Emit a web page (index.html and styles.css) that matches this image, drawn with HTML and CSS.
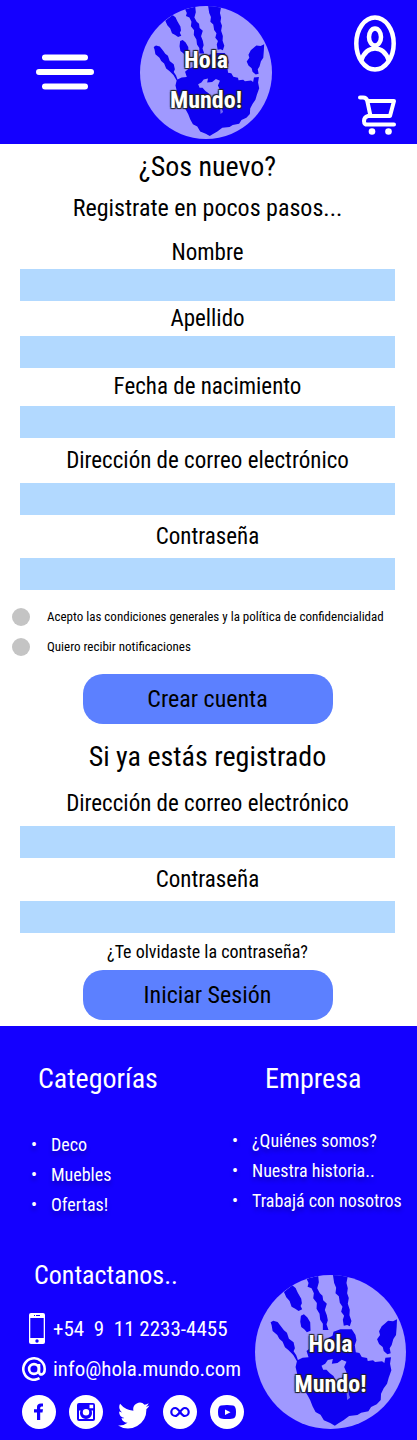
FILE: index.html
```html
<!DOCTYPE html>
<html lang="es">
<head>
<meta charset="utf-8">
<meta name="viewport" content="width=device-width, initial-scale=1">
<title>Hola Mundo!</title>
<link rel="stylesheet" href="styles.css">
</head>
<body>
<svg class="sprite" aria-hidden="true">
  <symbol id="hand" viewBox="29 44 454 462" preserveAspectRatio="none">
    <clipPath id="disc"><ellipse cx="256" cy="275" rx="227" ry="231"/></clipPath>
    <ellipse cx="256" cy="275" rx="227" ry="231" fill="#a099ff"/>
    <g clip-path="url(#disc)" fill="#0e00f2">
      <path d="M76 186 84 181 97 185 108 199 116 210 125 217 131 235 145 246 149 264 145 273 153 285 158 299 172 292 190 291 184 272 196 262 240 245 250 232 262 226 265 214 286 207 320 207 331 224 334 240 329 255 332 276 343 278 350 290 366 293 368 302 384 300 390 305 411 303 418 308 421 292 438 291 435 310 439 330 431 352 426 370 416 384 408 400 407 419 395 432 378 440 370 453 348 457 337 464 312 467 295 480 280 489 269 496 255 488 236 480 226 463 211 455 202 438 195 420 187 405 170 378 158 350 151 320 155 303 144 284 130 270 119 261 112 244 102 235 96 224 82 212 79 195Z"/>
      <path d="M116 95 141 75 151 83 158 98 168 115 170 129 166 137 171 147 160 152 150 145 139 139 133 122 123 111Z"/>
      <path d="M167 166 176 162 186 171 195 186 196 211 185 216 177 207 168 200 165 184Z"/>
      <path d="M184 55 219 46 221 66 216 84 224 99 232 106 234 120 245 130 239 149 245 165 248 180 244 192 250 209 233 209 233 190 225 178 223 160 214 145 215 128 204 114 206 99 199 84 187 79 190 68Z"/>
      <path d="M263 42 309 42 304 68 308 84 306 99 311 113 308 130 314 148 313 165 319 182 314 198 306 194 296 196 293 178 297 166 288 154 292 139 284 127 281 108 271 99 273 82 267 68Z"/>
      <path d="M456 177 444 183 429 181 419 190 410 198 402 213 405 224 396 237 402 251 413 260 416 272 427 282 437 279 434 264 440 254 445 236 453 224 455 199Z"/>
      <path fill="#a099ff" d="M229 316 240 310 248 299 263 296 260 310 277 308 290 298 304 304 297 320 304 336 302 352 291 349 287 360 272 361 265 347 254 339 244 328 234 328Z"/>
      <path fill="#6f67f4" d="M304 389 312 381 311 402 315 412 306 419Z"/>
    </g>
  </symbol>
</svg>

<header class="top">
  <button class="menu" type="button" aria-label="Menú">
    <svg width="58" height="36" viewBox="0 0 58 36" stroke="#fff" stroke-width="6" stroke-linecap="round"><path d="M9 3.500H49M3 18H55M9 32.500H49"/></svg>
  </button>
  <a class="logo" href="#">
    <svg class="logo-art" aria-hidden="true"><use href="#hand"/></svg>
    <span class="logo-text">Hola<br>Mundo!</span>
  </a>
  <nav class="tools">
    <a href="#" aria-label="Mi cuenta">
      <svg width="42" height="57" viewBox="0 0 42 57" fill="none" stroke="#fff" stroke-width="4.500"><ellipse cx="21" cy="28.500" rx="18.700" ry="26"/><ellipse cx="21" cy="22" rx="6" ry="8.500"/><path d="M7 46C10 37 15 33.500 21 33.500S32 37 35 46"/></svg>
    </a>
    <a href="#" aria-label="Carrito">
      <svg width="38" height="40" viewBox="0 0 38 40" fill="none" stroke="#fff" stroke-width="4" stroke-linecap="round" stroke-linejoin="round"><path d="M2 2.500H5Q8.500 2.500 9.300 6L12.500 21M9.500 6H36L32 21H10Q6 22 6 26T10 29.500H36"/><g fill="#fff" stroke="none"><circle cx="14" cy="36.500" r="3.300"/><circle cx="30.500" cy="36.500" r="3.300"/></g></svg>
    </a>
  </nav>
</header>

<main>
  <form class="form">
    <h1 class="title">¿Sos nuevo?</h1>
    <p class="lead">Registrate en pocos pasos...</p>
    <label class="label label-short" for="name">Nombre</label>
    <input class="box" id="name" type="text">
    <label class="label" for="surname">Apellido</label>
    <input class="box" id="surname" type="text">
    <label class="label label-mid" for="birth">Fecha de nacimiento</label>
    <input class="box" id="birth" type="text">
    <label class="label label-tall" for="mail">Dirección de correo electrónico</label>
    <input class="box" id="mail" type="email">
    <label class="label label-pass" for="pass">Contraseña</label>
    <input class="box" id="pass" type="password">
    <div class="checks">
      <label class="check"><input type="checkbox"><span>Acepto las condiciones generales y la política de confidencialidad</span></label>
      <label class="check"><input type="checkbox"><span>Quiero recibir notificaciones</span></label>
    </div>
    <button class="action" type="submit">Crear cuenta</button>
  </form>
  <form class="form login">
    <h2 class="title">Si ya estás registrado</h2>
    <label class="label label-tall" for="login-mail">Dirección de correo electrónico</label>
    <input class="box" id="login-mail" type="email">
    <label class="label label-pass" for="login-pass">Contraseña</label>
    <input class="box" id="login-pass" type="password">
    <a class="forgot" href="#">¿Te olvidaste la contraseña?</a>
    <button class="action" type="submit">Iniciar Sesión</button>
  </form>
</main>

<footer class="foot">
  <div class="links">
    <section>
      <h2 class="foot-title">Categorías</h2>
      <ul class="list">
        <li><a href="#">Deco</a></li>
        <li><a href="#">Muebles</a></li>
        <li><a href="#">Ofertas!</a></li>
      </ul>
    </section>
    <section class="company">
      <h2 class="foot-title">Empresa</h2>
      <ul class="list">
        <li><a href="#">¿Quiénes somos?</a></li>
        <li><a href="#">Nuestra historia..</a></li>
        <li><a href="#">Trabajá con nosotros</a></li>
      </ul>
    </section>
  </div>
  <div class="contact">
    <section>
      <h2 class="foot-title contact-title">Contactanos..</h2>
      <a class="line" href="tel:+5491122334455">
        <svg class="line-icon" width="24" height="32" viewBox="0 0 24 32"><rect x="7" width="16" height="31" rx="2" fill="#fff"/><path fill="#1400ff" d="M8.300 5H21.700V25H8.300ZM12 2H13V3H12ZM14 2H18V3H14Z"/><circle cx="15" cy="28" r="1.700" fill="#1400ff"/></svg>
        <span class="phone">+54  9  11 2233-4455</span>
      </a>
      <a class="line" href="mailto:info@hola.mundo.com">
        <svg class="line-icon" width="24" height="24" viewBox="0 0 24 24" fill="none" stroke="#fff" stroke-width="2.600"><circle cx="12" cy="12" r="4.900"/><path d="M17 7V14.500C17 19 22.700 18.500 22.700 12A10.700 10.700 0 1 0 17.500 21.200"/></svg>
        <span>info@hola.mundo.com</span>
      </a>
      <nav class="social">
        <a href="#" aria-label="Facebook"><svg width="34" height="34" viewBox="0 0 34 34"><circle cx="17" cy="17" r="17" fill="#fff"/><path d="M15 25V17.500H12V14.300H15V12Q15 8.500 19 8.500H21V11.500H19.500Q18.200 11.500 18.200 13V14.300H21L20.500 17.500H18.200V25Z" fill="#1400ff"/></svg></a>
        <a href="#" aria-label="Instagram"><svg width="34" height="34" viewBox="0 0 34 34"><circle cx="17" cy="17" r="17" fill="#fff"/><path fill-rule="evenodd" fill="#1400ff" d="M10 8H24Q26 8 26 10V24Q26 26 24 26H10Q8 26 8 24V10Q8 8 10 8ZM20.500 9.800V13.300H24.200V9.800ZM10 15.500V24H24V15.500H22.500A6 6 0 1 1 11.500 15.500Z"/><circle cx="17" cy="17.300" r="4" fill="#fff" stroke="#1400ff" stroke-width="1.500"/></svg></a>
        <a href="#" aria-label="Twitter"><svg width="34" height="34" viewBox="-1 -3 25 25"><path fill="#fff" d="M23.600 4.800A9 9 0 0 1 21 5.600 4.700 4.700 0 0 0 23 3a9.600 9.600 0 0 1-3 1.200A4.800 4.800 0 0 0 11.800 8.500 13.500 13.500 0 0 1 2 3.500a4.800 4.800 0 0 0 1.500 6.300 4.700 4.700 0 0 1-2.200-.6A4.800 4.800 0 0 0 5.200 14a4.800 4.800 0 0 1-2.200.1 4.800 4.800 0 0 0 4.500 3.300A9.600 9.600 0 0 1 .5 19.400 13.500 13.500 0 0 0 21.300 7.400 9.600 9.600 0 0 0 23.600 4.800Z"/></svg></a>
        <a href="#" aria-label="Comunidad"><svg width="34" height="34" viewBox="0 0 34 34"><circle cx="17" cy="17" r="17" fill="#fff"/><path d="M17 17C14.500 13.500 13.500 13 12.300 13A4 4 0 0 0 12.300 21C13.500 21 14.500 20.500 17 17S20.500 13 21.700 13A4 4 0 0 1 21.700 21C20.500 21 19.500 20.500 17 17Z" fill="none" stroke="#1400ff" stroke-width="2.200"/></svg></a>
        <a href="#" aria-label="YouTube"><svg width="34" height="34" viewBox="0 0 34 34"><circle cx="17" cy="17" r="17" fill="#fff"/><path fill="#1400ff" d="M11 10.500Q17 9.500 23 10.500 26 11 26 17T23 23.500Q17 24.500 11 23.500 8 23 8 17T11 10.500Z"/><path fill="#fff" d="M15 14.500V20L20.500 17.200Z"/></svg></a>
      </nav>
    </section>
    <a class="logo logo-big" href="#">
      <svg class="logo-art" aria-hidden="true"><use href="#hand"/></svg>
      <span class="logo-text">Hola<br>Mundo!</span>
    </a>
  </div>
</footer>
</body>
</html>
```
FILE: styles.css
```css
* { box-sizing: border-box; }

body {
  margin: 0;
  background: #fff;
  color: #000;
  font-family: "Liberation Sans Narrow", "Roboto Condensed", "Open Sans Condensed", Lato, sans-serif;
}

h1, h2, p, ul { margin: 0; padding: 0; font-weight: 400; }
a { color: inherit; text-decoration: none; }
svg { display: block; }
button, input { font: inherit; color: inherit; border: 0; padding: 0; }
button { cursor: pointer; }
.sprite { position: absolute; width: 0; height: 0; }

.top {
  display: grid;
  grid-template-columns: 1fr auto 1fr;
  align-items: center;
  min-height: 144px;
  padding: 0 5px 0 0;
  background: #1400ff;
}
.menu { justify-self: start; margin-left: 36px; background: none; }
.tools {
  display: flex;
  flex-direction: column;
  align-items: flex-end;
  gap: 23px;
  padding: 6px 16px 0 0;
}

.logo { display: grid; width: 132px; height: 133px; }
.logo-art, .logo-text { grid-area: 1 / 1; }
.logo-art { width: 100%; height: 100%; }
.logo-text {
  align-self: center;
  padding-top: 16px;
  color: #fff;
  font-size: 24px;
  font-weight: 700;
  line-height: 40px;
  text-align: center;
  text-shadow: 1px 1px 1px #222, -1px -1px 1px #222, 1px -1px 1px #222, -1px 1px 1px #222;
}
.logo-big { width: 151px; height: 154px; }
.logo-big .logo-text { padding-top: 24px; }

.form {
  display: flex;
  flex-direction: column;
  padding: 0 22px 0 20px;
  text-align: center;
}
.title { font-size: 28px; line-height: 46px; }
.lead { font-size: 24px; line-height: 36px; margin-bottom: 10px; }
.label { font-size: 23px; line-height: 35px; }
.label-short { line-height: 33px; }
.label-mid { line-height: 38px; }
.label-tall { line-height: 45px; }
.label-pass { line-height: 43px; }
.box { width: 100%; height: 32px; padding: 0 8px; background: #b2d9ff; border-radius: 0; }
.checks { display: flex; flex-direction: column; gap: 12px; margin: 18px -20px 18px -8px; }
.check {
  display: flex;
  align-items: center;
  gap: 17px;
  font-size: 13px;
  line-height: 18px;
  text-align: left;
}
.check input {
  flex: none;
  appearance: none;
  width: 18px;
  height: 18px;
  margin: 0;
  border-radius: 50%;
  background: #c4c4c4;
}
.check input:checked { background: #5c80ff; }
.action {
  align-self: center;
  width: 250px;
  height: 50px;
  border-radius: 20px;
  background: #5c80ff;
  font-size: 24px;
}
.login { padding-top: 10px; padding-bottom: 6px; }
.login .title { margin-bottom: 1px; }
.forgot { font-size: 18px; line-height: 37px; }

.foot { padding: 32px 11px 11px 22px; background: #1400ff; color: #fff; }
.links { display: grid; grid-template-columns: 201px 1fr; }
.foot-title { font-size: 28px; line-height: 42px; padding-left: 16px; }
.company .foot-title { padding-left: 42px; }
.list {
  margin-top: 30px;
  padding-left: 29px;
  font-size: 18px;
  line-height: 30px;
  white-space: nowrap;
  text-shadow: 0 4px 4px rgba(0, 0, 0, 0.25);
}
.company .list { margin-top: 26px; }
.list li { list-style: none; display: flex; }
.list li::before { content: "•"; width: 20px; margin-left: -20px; font-size: 18px; }

.contact { display: flex; justify-content: space-between; align-items: flex-end; margin-top: 34px; }
.contact-title { padding-left: 12px; font-size: 26px; }
.line { display: flex; align-items: center; gap: 7px; height: 40px; font-size: 21px; }
.contact-title + .line { margin-top: 13px; }
.phone { white-space: pre; }
.social { display: flex; gap: 13px; margin-top: 6px; }
```
